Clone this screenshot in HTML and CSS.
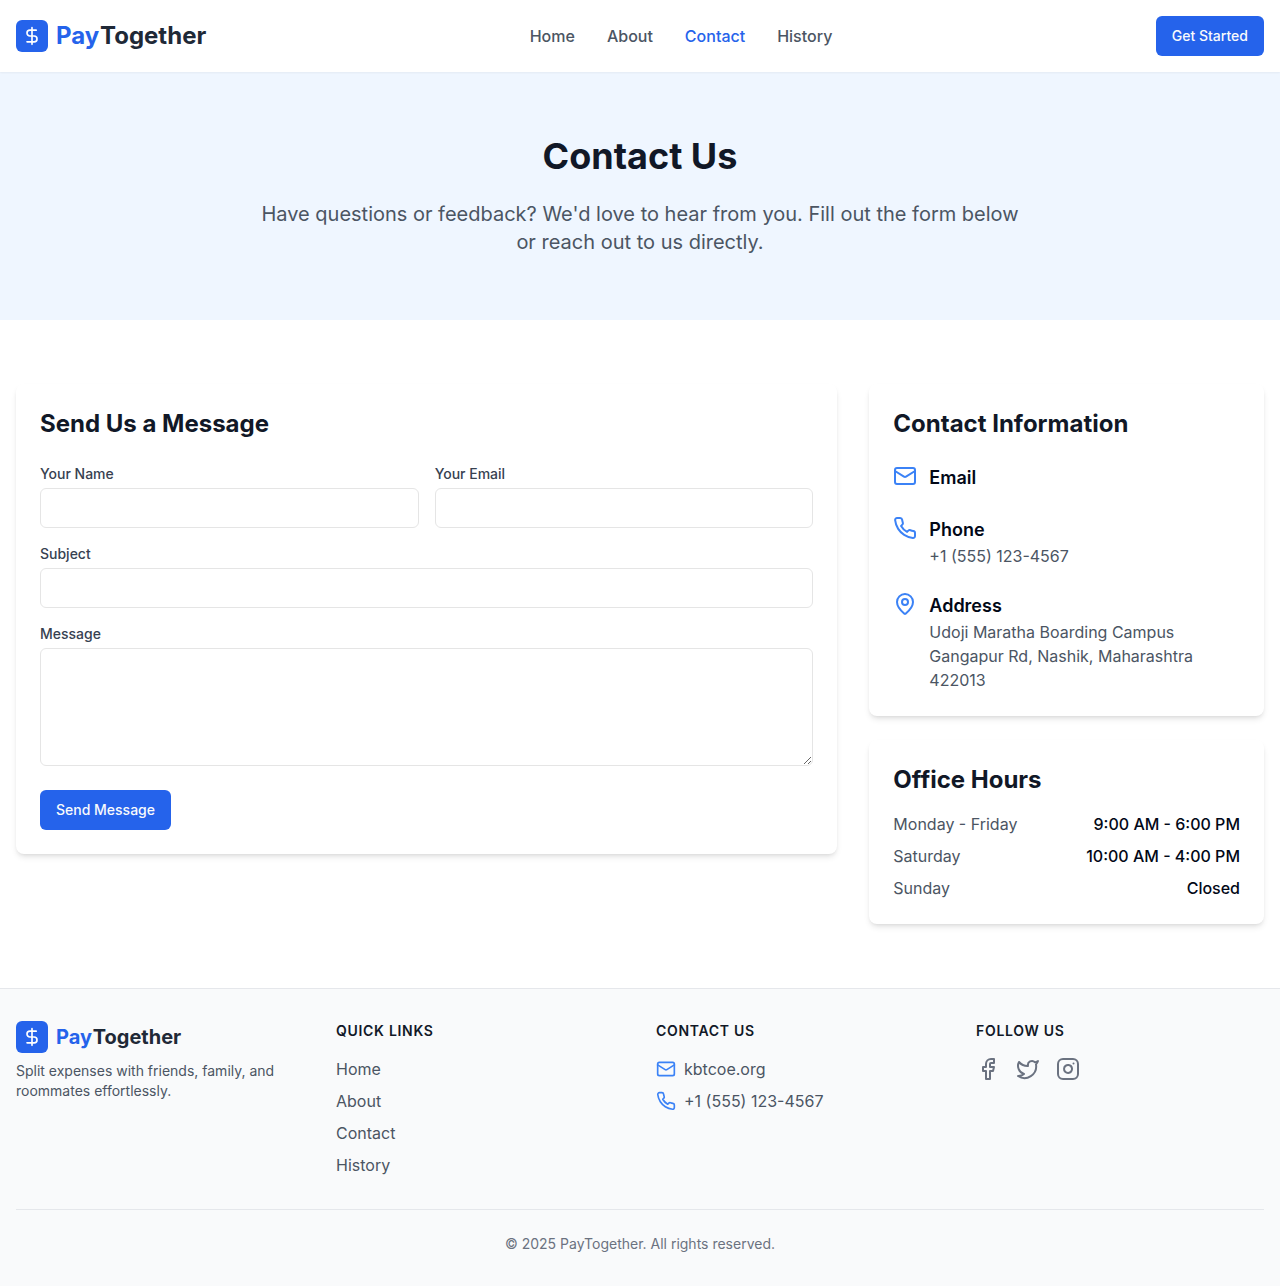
FILE: index.html
```html
<!DOCTYPE html>
<html lang="en">
<head>
<meta charset="utf-8">
<meta name="viewport" content="width=device-width, initial-scale=1">
<title>Contact Us | PayTogether</title>
<link rel="stylesheet" href="styles.css">
</head>
<body>
<svg class="sprite" aria-hidden="true">
  <symbol id="dollar" viewBox="0 0 24 24"><line x1="12" x2="12" y1="2" y2="22"/><path d="M17 5H9.5a3.5 3.5 0 0 0 0 7h5a3.5 3.5 0 0 1 0 7H6"/></symbol>
  <symbol id="mail" viewBox="0 0 24 24"><rect width="20" height="16" x="2" y="4" rx="2"/><path d="m22 7-8.97 5.7a1.94 1.94 0 0 1-2.06 0L2 7"/></symbol>
  <symbol id="phone" viewBox="0 0 24 24"><path d="M22 16.92v3a2 2 0 0 1-2.18 2 19.79 19.79 0 0 1-8.63-3.07 19.5 19.5 0 0 1-6-6 19.79 19.79 0 0 1-3.07-8.67A2 2 0 0 1 4.11 2h3a2 2 0 0 1 2 1.72 12.84 12.84 0 0 0 .7 2.81 2 2 0 0 1-.45 2.11L8.09 9.91a16 16 0 0 0 6 6l1.27-1.27a2 2 0 0 1 2.11-.45 12.84 12.84 0 0 0 2.81.7A2 2 0 0 1 22 16.92z"/></symbol>
  <symbol id="pin" viewBox="0 0 24 24"><path d="M20 10c0 4.993-5.539 10.193-7.399 11.799a1 1 0 0 1-1.202 0C9.539 20.193 4 14.993 4 10a8 8 0 0 1 16 0"/><circle cx="12" cy="10" r="3"/></symbol>
  <symbol id="facebook" viewBox="0 0 24 24"><path d="M18 2h-3a5 5 0 0 0-5 5v3H7v4h3v8h4v-8h3l1-4h-4V7a1 1 0 0 1 1-1h3z"/></symbol>
  <symbol id="twitter" viewBox="0 0 24 24"><path d="M22 4s-.7 2.1-2 3.4c1.6 10-9.4 17.3-18 11.6 2.2.1 4.4-.6 6-2C3 15.5.5 9.6 3 5c2.2 2.6 5.6 4.1 9 4-.9-4.2 4-6.6 7-3.8 1.1 0 3-1.2 3-1.2z"/></symbol>
  <symbol id="instagram" viewBox="0 0 24 24"><rect width="20" height="20" x="2" y="2" rx="5" ry="5"/><path d="M16 11.37A4 4 0 1 1 12.63 8 4 4 0 0 1 16 11.37z"/><line x1="17.5" x2="17.51" y1="6.5" y2="6.5"/></symbol>
</svg>

<header class="header">
  <a class="brand" href="#"><span class="brand-mark"><svg class="icon icon-sm"><use href="#dollar"/></svg></span><span class="brand-name"><span class="brand-pay">Pay</span>Together</span></a>
  <nav class="nav">
    <a href="#">Home</a>
    <a href="#">About</a>
    <a class="active" href="#">Contact</a>
    <a href="#">History</a>
  </nav>
  <button class="button" type="button">Get Started</button>
</header>

<main>
  <section class="hero">
    <h1>Contact Us</h1>
    <p>Have questions or feedback? We'd love to hear from you. Fill out the form below or reach out to us directly.</p>
  </section>

  <div class="content">
    <section class="card card-form">
      <h2>Send Us a Message</h2>
      <form class="form">
        <div class="form-row">
          <div class="field"><label for="name">Your Name</label><input id="name" type="text"></div>
          <div class="field"><label for="email">Your Email</label><input id="email" type="email"></div>
        </div>
        <div class="field"><label for="subject">Subject</label><input id="subject" type="text"></div>
        <div class="field"><label for="message">Message</label><textarea id="message" rows="5"></textarea></div>
        <button class="button button-send" type="button">Send Message</button>
      </form>
    </section>

    <div class="side">
      <section class="card">
        <h2>Contact Information</h2>
        <div class="contacts">
          <div class="contact"><svg class="icon icon-blue"><use href="#mail"/></svg><div><h3>Email</h3></div></div>
          <div class="contact"><svg class="icon icon-blue"><use href="#phone"/></svg><div><h3>Phone</h3><p>+1 (555) 123-4567</p></div></div>
          <div class="contact"><svg class="icon icon-blue"><use href="#pin"/></svg><div><h3>Address</h3><p>Udoji Maratha Boarding Campus<br>Gangapur Rd, Nashik, Maharashtra 422013</p></div></div>
        </div>
      </section>
      <section class="card card-hours">
        <h2>Office Hours</h2>
        <dl class="hours">
          <div><dt>Monday - Friday</dt><dd>9:00 AM - 6:00 PM</dd></div>
          <div><dt>Saturday</dt><dd>10:00 AM - 4:00 PM</dd></div>
          <div><dt>Sunday</dt><dd>Closed</dd></div>
        </dl>
      </section>
    </div>
  </div>
</main>

<footer class="footer">
  <div class="footer-grid">
    <div>
      <a class="brand brand-small" href="#"><span class="brand-mark"><svg class="icon icon-sm"><use href="#dollar"/></svg></span><span class="brand-name"><span class="brand-pay">Pay</span>Together</span></a>
      <p class="tagline">Split expenses with friends, family, and roommates effortlessly.</p>
    </div>
    <div>
      <h3>Quick Links</h3>
      <ul class="links">
        <li><a href="#">Home</a></li>
        <li><a href="#">About</a></li>
        <li><a href="#">Contact</a></li>
        <li><a href="#">History</a></li>
      </ul>
    </div>
    <div>
      <h3>Contact Us</h3>
      <ul class="links">
        <li><svg class="icon icon-sm icon-blue"><use href="#mail"/></svg><span>kbtcoe.org</span></li>
        <li><svg class="icon icon-sm icon-blue"><use href="#phone"/></svg><span>+1 (555) 123-4567</span></li>
      </ul>
    </div>
    <div>
      <h3>Follow Us</h3>
      <div class="social">
        <a href="#" aria-label="Facebook"><svg class="icon"><use href="#facebook"/></svg></a>
        <a href="#" aria-label="Twitter"><svg class="icon"><use href="#twitter"/></svg></a>
        <a href="#" aria-label="Instagram"><svg class="icon"><use href="#instagram"/></svg></a>
      </div>
    </div>
  </div>
  <p class="copyright">© 2025 PayTogether. All rights reserved.</p>
</footer>
</body>
</html>
```
FILE: styles.css
```css
*, *::before, *::after {
  box-sizing: border-box;
}

body, h1, h2, h3, p, ul, dl, dd {
  margin: 0;
  padding: 0;
}

body {
  font-family: Inter, "Liberation Sans", sans-serif;
  font-size: 16px;
  line-height: 24px;
  color: #020817;
  background: #fff;
  -webkit-font-smoothing: antialiased;
}

a {
  color: inherit;
  text-decoration: none;
}

ul {
  list-style: none;
}

.sprite {
  display: none;
}

.icon {
  display: block;
  flex-shrink: 0;
  width: 24px;
  height: 24px;
  fill: none;
  stroke: currentColor;
  stroke-width: 2;
  stroke-linecap: round;
  stroke-linejoin: round;
}

.icon-sm {
  width: 20px;
  height: 20px;
}

.icon-blue {
  color: #3b82f6;
}

/* Header */
.header {
  position: relative;
  display: flex;
  align-items: center;
  justify-content: space-between;
  height: 72px;
  padding: 0 16px;
  background: #fff;
  box-shadow: 0 1px 2px rgba(0, 0, 0, 0.05);
}

.brand {
  display: flex;
  align-items: center;
  gap: 8px;
  font-size: 24px;
  line-height: 32px;
  font-weight: 700;
  color: #1f2937;
}

.brand-small {
  font-size: 20px;
}

.brand-mark {
  display: flex;
  align-items: center;
  justify-content: center;
  width: 32px;
  height: 32px;
  border-radius: 6px;
  background: #2563eb;
  color: #fff;
}

.brand-pay {
  margin-right: 0.035em;
  color: #2563eb;
}

.nav {
  display: flex;
  gap: 32px;
  font-weight: 500;
  color: #4b5563;
}

.nav .active {
  color: #2563eb;
}

.button {
  height: 40px;
  padding: 0 16px;
  border: 0;
  border-radius: 6px;
  background: #2563eb;
  color: #f8fafc;
  font: 500 14px/20px Inter, "Liberation Sans", sans-serif;
}

/* Hero */
.hero {
  padding: 64px 16px;
  background: #eff6ff;
  text-align: center;
}

.hero h1 {
  margin-bottom: 24px;
  font-size: 36px;
  line-height: 40px;
  font-weight: 700;
  color: #111827;
}

.hero p {
  max-width: 768px;
  margin: 0 auto;
  font-size: 20px;
  line-height: 28px;
  color: #4b5563;
}

/* Cards */
.content {
  display: grid;
  grid-template-columns: repeat(3, minmax(0, 1fr));
  align-items: start;
  gap: 32px;
  padding: 64px 16px;
}

.card {
  padding: 24px;
  border-radius: 8px;
  background: #fff;
  box-shadow: 0 4px 6px -1px rgba(0, 0, 0, 0.1), 0 2px 4px -2px rgba(0, 0, 0, 0.1);
}

.card-form {
  grid-column: span 2;
}

.card h2 {
  margin-bottom: 24px;
  font-size: 24px;
  line-height: 32px;
  font-weight: 700;
  color: #111827;
}

.card-hours h2 {
  margin-bottom: 16px;
}

.side {
  display: grid;
  gap: 24px;
}

.form {
  display: flex;
  flex-direction: column;
  gap: 16px;
}

.form-row {
  display: grid;
  grid-template-columns: 1fr 1fr;
  gap: 16px;
}

.field {
  display: flex;
  flex-direction: column;
  gap: 4px;
}

.field label {
  font-size: 14px;
  line-height: 20px;
  font-weight: 500;
  color: #374151;
}

.field input,
.field textarea {
  display: block;
  width: 100%;
  padding: 8px 12px;
  border: 1px solid #e5e5e5;
  border-radius: 6px;
  background: #fff;
  font: 14px/20px Inter, "Liberation Sans", sans-serif;
}

.field input {
  height: 40px;
}

.field textarea {
  height: 118px;
  resize: vertical;
}

.button-send {
  align-self: flex-start;
  margin-top: 8px;
}

.contacts {
  display: grid;
  gap: 24px;
}

.contact {
  display: flex;
  gap: 12px;
}

.contact h3 {
  font-size: 18px;
  line-height: 28px;
  font-weight: 600;
}

.contact p {
  color: #4b5563;
}

.hours {
  display: grid;
  gap: 8px;
}

.hours div {
  display: flex;
  justify-content: space-between;
}

.hours dt {
  color: #4b5563;
}

.hours dd {
  font-weight: 500;
}

/* Footer */
.footer {
  padding: 32px 16px;
  border-top: 1px solid #e5e7eb;
  background: #f9fafb;
}

.footer-grid {
  display: grid;
  grid-template-columns: repeat(4, minmax(0, 1fr));
  gap: 32px;
  color: #4b5563;
}

.tagline {
  margin-top: 8px;
  font-size: 14px;
  line-height: 20px;
}

.footer h3 {
  margin-bottom: 16px;
  font-size: 14px;
  line-height: 20px;
  font-weight: 600;
  letter-spacing: 0.05em;
  text-transform: uppercase;
  color: #111827;
}

.links {
  display: grid;
  gap: 8px;
}

.links li {
  display: flex;
  align-items: center;
  gap: 8px;
}

.social {
  display: flex;
  gap: 16px;
  color: #6b7280;
}

.copyright {
  margin-top: 32px;
  padding-top: 24px;
  border-top: 1px solid #e5e7eb;
  font-size: 14px;
  line-height: 20px;
  text-align: center;
  color: #6b7280;
}
```
